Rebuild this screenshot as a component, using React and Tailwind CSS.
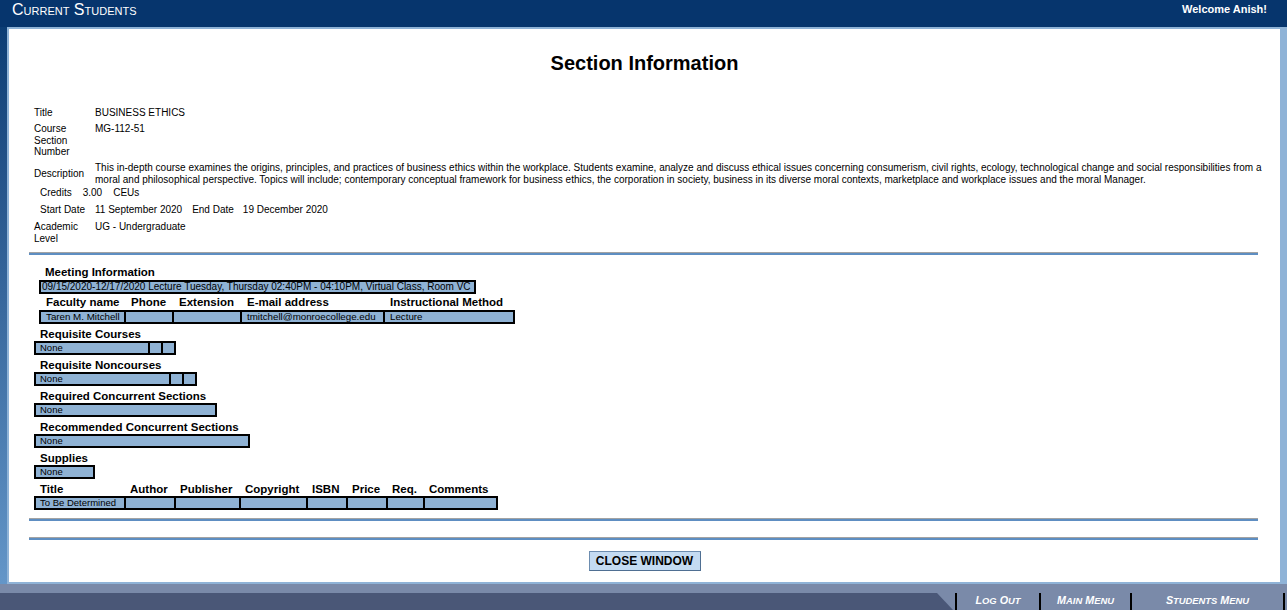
import React from "react"

// First letter of each word large, the rest as smaller capitals
const SmallCaps = ({ text, big, small }) => (
  <span className="whitespace-nowrap">
    {text.split(" ").map((word, i) => (
      <span key={i}>
        {i > 0 && <span className={big}> </span>}
        <span className={big}>{word[0]}</span>
        <span className={small}>{word.slice(1).toUpperCase()}</span>
      </span>
    ))}
  </span>
)

const Separator = ({ className = "" }) => (
  <div className={`ml-[20px] mr-[22px] h-[3px] border-t border-[#a3a3a3] bg-[#5e8ec2] ${className}`} />
)

// Row of collapsed black-bordered cells
const CellRow = ({ widths, values = [], pad = "pl-[4px]", size = "text-[9.5px]" }) => (
  <div className={`flex h-[14px] w-fit border-2 border-black bg-[#8fb2d4] divide-x-2 divide-black ${size} leading-[10px]`}>
    {widths.map((w, i) => (
      <div key={i} className={`${pad} whitespace-nowrap overflow-hidden`} style={{ width: w }}>
        {values[i] || ""}
      </div>
    ))}
  </div>
)

const HeadRow = ({ widths, labels, pad = "pl-[4px]", leading = "leading-[14px]" }) => (
  <div className={`flex w-fit border-x-2 border-transparent divide-x-2 divide-transparent text-[11.5px] font-bold ${leading}`}>
    {widths.map((w, i) => (
      <div key={i} className={`${pad} whitespace-nowrap`} style={{ width: w }}>
        {labels[i]}
      </div>
    ))}
  </div>
)

const SectionHead = ({ children }) => (
  <div className="mt-[4px] pl-[6px] text-[11.5px] font-bold leading-[13px]">{children}</div>
)

const facultyWidths = [85, 48, 68, 143, 128]
const bookWidths = [90, 50, 65, 67, 40, 40, 37, 71]

export default function App() {
  return (
    <div className="w-full h-[610px] overflow-hidden flex flex-col font-['Liberation_Sans',Arial,sans-serif] text-black">
      {/* header */}
      <div className="h-[27px] shrink-0 bg-[#06356d] flex items-start justify-between pl-[12px] pr-[20px] text-white leading-none">
        <div className="mt-[2px]">
          <SmallCaps text="Current Students" big="text-[16px]" small="text-[11px]" />
        </div>
        <span className="mt-[4px] text-[11px] font-bold">Welcome Anish!</span>
      </div>

      {/* body */}
      <div className="flex bg-gradient-to-b from-[#0c3d74] to-[#6496c8]">
        <div className="ml-[7px] flex-1 h-[557px] border-2 border-r-[7px] border-[#8fb3d7] bg-white flex flex-col">
          <h1 className="mt-[22px] text-center text-[20px] leading-[24px] font-bold">Section Information</h1>

          {/* course details */}
          <div className="ml-[25px] mt-[32px] text-[10px] leading-[11.5px] flex flex-col">
            <div className="flex">
              <div className="w-[61px] shrink-0">Title</div>
              <div>BUSINESS ETHICS</div>
            </div>
            <div className="flex mt-[4.5px]">
              <div className="w-[61px] shrink-0 pr-[4px]">Course Section Number</div>
              <div>MG-112-51</div>
            </div>
            <div className="flex items-center mt-[4.5px]">
              <div className="w-[61px] shrink-0">Description</div>
              <div className="flex-1 pr-[2px]">
                This in-depth course examines the origins, principles, and practices of business ethics within the workplace. Students examine, analyze and discuss ethical issues concerning consumerism, civil rights, ecology, technological change and social responsibilities from a moral and philosophical perspective. Topics will include; contemporary conceptual framework for business ethics, the corporation in society, business in its diverse moral contexts, marketplace and workplace issues and the moral Manager.
              </div>
            </div>
            <div className="flex gap-[11px] pl-[6px] mt-[2px]">
              <span>Credits</span>
              <span>3.00</span>
              <span>CEUs</span>
            </div>
            <div className="flex pl-[6px] mt-[5.5px]">
              <span>Start Date</span>
              <span className="ml-[10px]">11 September 2020</span>
              <span className="ml-[10px]">End Date</span>
              <span className="ml-[9px]">19 December 2020</span>
            </div>
            <div className="flex mt-[5.5px]">
              <div className="w-[61px] shrink-0">Academic Level</div>
              <div>UG - Undergraduate</div>
            </div>
          </div>

          <Separator className="mt-[8px]" />

          {/* meeting / faculty / requisites */}
          <div className="ml-[25px] flex flex-col">
            <div className="ml-[5px]">
              <div className="mt-[10px] pl-[6px] text-[11.5px] font-bold leading-[14px]">Meeting Information</div>
              <div className="mt-[1px] w-[437px] h-[14px] border-2 border-black bg-[#8fb2d4] pl-[1px] text-[10px] leading-[10px] whitespace-nowrap">
                09/15/2020-12/17/2020 Lecture Tuesday, Thursday 02:40PM - 04:10PM, Virtual Class, Room VC
              </div>
              <div className="mt-[1px]">
                <HeadRow
                  widths={facultyWidths}
                  pad="pl-[5px]"
                  labels={["Faculty name", "Phone", "Extension", "E-mail address", "Instructional Method"]}
                />
              </div>
              <div className="mt-[1px]">
                <CellRow
                  widths={facultyWidths}
                  pad="pl-[5px]"
                  size="text-[9.75px]"
                  values={["Taren M. Mitchell", "", "", "tmitchell@monroecollege.edu", "Lecture"]}
                />
              </div>
            </div>

            <SectionHead>Requisite Courses</SectionHead>
            <CellRow widths={[114, 13, 11]} values={["None"]} />

            <SectionHead>Requisite Noncourses</SectionHead>
            <CellRow widths={[135, 13, 11]} values={["None"]} />

            <SectionHead>Required Concurrent Sections</SectionHead>
            <CellRow widths={[179]} values={["None"]} />

            <SectionHead>Recommended Concurrent Sections</SectionHead>
            <CellRow widths={[212]} values={["None"]} />

            <SectionHead>Supplies</SectionHead>
            <CellRow widths={[57]} values={["None"]} />

            <div className="mt-[4px]">
              <HeadRow
                widths={bookWidths}
                leading="leading-[13px]"
                labels={["Title", "Author", "Publisher", "Copyright", "ISBN", "Price", "Req.", "Comments"]}
              />
            </div>
            <CellRow widths={bookWidths} values={["To Be Determined"]} />
          </div>

          <Separator className="mt-[8px]" />
          <Separator className="mt-[16px]" />

          <div className="mt-[11px] flex justify-center">
            <button className="w-[112px] h-[20px] bg-[#c4dbf2] border border-[#6d8db0] border-b-[#4f6f92] border-r-[#4f6f92] text-[12px] font-bold leading-none">
              CLOSE WINDOW
            </button>
          </div>
        </div>
      </div>

      {/* footer */}
      <div className="h-[9px] shrink-0 bg-[#7a8aa9]" />
      <div className="flex-1 flex bg-[#4a5777]">
        <div className="flex-1" />
        <svg width="16" height="17" viewBox="0 0 16 17" className="shrink-0 block">
          <polygon points="0,0 16,0 16,17" fill="#7a8aa9" />
        </svg>
        <div className="flex bg-[#7a8aa9] pl-[2px] pr-[2px] text-white font-bold italic">
          {[
            ["Log Out", "w-[84px]"],
            ["Main Menu", "w-[91px]"],
            ["Students Menu", "w-[153px]"],
          ].map(([label, w]) => (
            <div key={label} className={`${w} border-l-2 border-black flex items-center justify-center text-[9px] leading-none pb-[2px]`}>
              <SmallCaps text={label} big="text-[10.75px]" small="text-[9.4px]" />
            </div>
          ))}
          <div className="border-l-2 border-black" />
        </div>
      </div>
    </div>
  )
}
